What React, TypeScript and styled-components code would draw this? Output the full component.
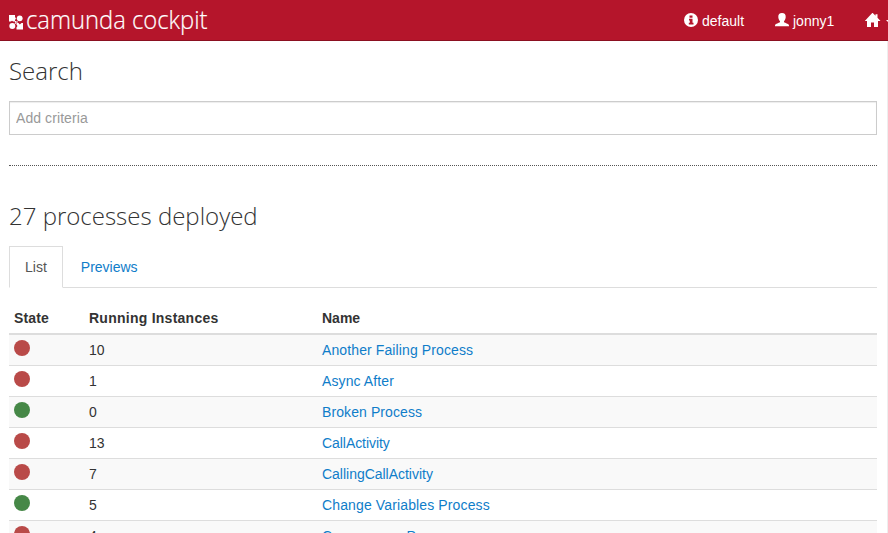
import React from "react";
import styled, { createGlobalStyle } from "styled-components";

const GlobalStyle = createGlobalStyle`
  * { box-sizing: border-box; }
  html, body { margin: 0; height: 533px; overflow: hidden; background: #fff; }
  body { font: 14px/20px "Liberation Sans", Arial, sans-serif; color: #333; }
`;

const Page = styled.div`
  height: 533px;
  overflow: hidden;
`;

const Header = styled.header`
  display: flex;
  height: 41px;
  background: #b5152b;
  border-bottom: 1px solid #8b1021;
  color: #fff;
`;

const Brand = styled.div`
  display: flex;
  flex: none;
  width: 684px;
  padding-left: 9px;
`;

const BrandMark = styled.svg`
  flex: none;
  width: 14px;
  height: 15px;
  margin-top: 15px;
`;

const BrandName = styled.span`
  margin-left: 3px;
  font: 300 26.5px/38px "Open Sans", sans-serif;
  -webkit-text-stroke: 0.2px #fff;
  white-space: nowrap;
  transform: scaleX(0.898);
  transform-origin: 0 50%;
`;

const NavItem = styled.div<{ $width: number }>`
  display: flex;
  flex: none;
  width: ${(p) => p.$width}px;
  padding-top: 11px;
  white-space: nowrap;
`;

const NavIcon = styled.svg`
  flex: none;
  width: 16px;
  height: 16px;
  margin: 2px 2px 0 0;
`;

const Caret = styled.span`
  flex: none;
  margin: 9px 0 0 3px;
  height: 4px;
  border: 4px solid transparent;
  border-top-color: #fff;
  border-bottom: 0;
`;

const Content = styled.main`
  height: 492px;
  padding: 0 10px 0 9px;
  border-right: 1px solid #eee;
  overflow: hidden;
`;

const Heading = styled.h3<{ $top: number }>`
  margin: 0;
  padding-top: ${(p) => p.$top}px;
  font: 300 24px/30px "Open Sans", sans-serif;
`;

const SearchInput = styled.input`
  display: block;
  width: 100%;
  height: 34px;
  margin-top: 15px;
  padding: 0 6px;
  border: 1px solid #ccc;
  border-radius: 0;
  outline: none;
  box-shadow: inset 0 1px 1px rgba(0, 0, 0, 0.075);
  font: inherit;
  letter-spacing: 0.08px;
  &::placeholder { color: #999; opacity: 1; }
`;

const Divider = styled.div`
  margin-top: 30px;
  border-top: 1px dotted #555;
`;

const Tabs = styled.div`
  display: flex;
  height: 42px;
  margin-top: 15px;
  border-bottom: 1px solid #ddd;
`;

const Tab = styled.div<{ $active?: boolean }>`
  height: 42px;
  margin-right: 2px;
  padding: 10px 15px;
  border: 1px solid ${(p) => (p.$active ? "#ddd" : "transparent")};
  border-bottom-color: ${(p) => (p.$active ? "#fff" : "transparent")};
  color: ${(p) => (p.$active ? "#555" : "#0f7dc9")};
`;

const Table = styled.table`
  width: 100%;
  margin-top: 15px;
  border-spacing: 0;
  table-layout: fixed;
`;

const HeadCell = styled.th<{ $width?: number; $tracking: number }>`
  width: ${(p) => (p.$width ? `${p.$width}px` : "auto")};
  height: 32px;
  padding: 0 5px;
  border-bottom: 2px solid #ddd;
  text-align: left;
  letter-spacing: ${(p) => p.$tracking}px;
`;

const Row = styled.tr`
  &:nth-child(odd) { background: #f9f9f9; }
`;

const Cell = styled.td`
  height: 31px;
  padding: 0 5px;
  border-bottom: 1px solid #ddd;
`;

const State = styled.span<{ $failing: boolean }>`
  display: block;
  width: 16px;
  height: 16px;
  margin-bottom: 5px;
  border-radius: 50%;
  background: ${(p) => (p.$failing ? "#b94a48" : "#468847")};
`;

const ProcessLink = styled.a<{ $tracking: number }>`
  color: #0f7dc9;
  letter-spacing: ${(p) => p.$tracking}px;
`;

const processes = [
  { name: "Another Failing Process", instances: 10, failing: true, tracking: 0.11 },
  { name: "Async After", instances: 1, failing: true, tracking: 0.1 },
  { name: "Broken Process", instances: 0, failing: false, tracking: 0.09 },
  { name: "CallActivity", instances: 13, failing: true, tracking: -0.06 },
  { name: "CallingCallActivity", instances: 7, failing: true, tracking: -0.02 },
  { name: "Change Variables Process", instances: 5, failing: false, tracking: 0.13 },
  { name: "Concurrency Process", instances: 4, failing: true, tracking: 0.1 },
];

export default function App() {
  return (
    <Page>
      <GlobalStyle />
      <Header>
        <Brand>
          <BrandMark viewBox="0 0 14 15">
            <path fill="#fff" d="M0 0h6v2.200a1.400 1.400 0 0 1 0 2.600V6.500H4a1.200 1.200 0 0 0-2 0H0z" />
            <circle cx="10.700" cy="3.300" r="2.900" fill="#fff" />
            <circle cx="3.300" cy="11" r="3" fill="#fff" />
            <path fill="#fff" d="M14 14.500H7.500v-2.300a1.300 1.300 0 0 0 0-2.400V8h2l1.300 1.500L12.500 8H14z" />
            <path fill="none" stroke="#fff" d="M5 5l2 2h2M6 9l1-2" />
          </BrandMark>
          <BrandName>camunda cockpit</BrandName>
        </Brand>
        <NavItem $width={91}>
          <NavIcon viewBox="0 0 16 16">
            <circle cx="7" cy="7" r="7" fill="#fff" />
            <path fill="#b5152b" d="M5.500 2.500h3v2.200h-3zM5 5.800h3.500v4h1v1.700H4.800V9.800h1V7.500H5z" />
          </NavIcon>
          default
        </NavItem>
        <NavItem $width={90}>
          <NavIcon viewBox="0 0 16 16">
            <path fill="#fff" d="M7 0c2.500 0 4 1.500 3.700 4.200-.2 1.800-.8 3-1.700 4v1.100c1.400.8 4.200 1.500 4.800 2.400.2.400.2 1 .2 1.500H0c0-.5 0-1.100.2-1.500.6-.9 3.400-1.600 4.800-2.400V8.200c-.9-1-1.500-2.200-1.700-4C3 1.500 4.500 0 7 0z" />
          </NavIcon>
          jonny1
        </NavItem>
        <NavItem $width={23}>
          <NavIcon viewBox="0 0 16 16">
            <path fill="#fff" d="M7.500-.3l3 3V1.200h2V4.700L15.500 8H13v6H9V9.500H6V14H2V8H-.2z" />
          </NavIcon>
          <Caret />
        </NavItem>
      </Header>
      <Content>
        <Heading $top={15}>Search</Heading>
        <SearchInput placeholder="Add criteria" />
        <Divider />
        <Heading $top={35}>27 processes deployed</Heading>
        <Tabs>
          <Tab $active>List</Tab>
          <Tab>Previews</Tab>
        </Tabs>
        <Table>
          <thead>
            <tr>
              <HeadCell $width={75} $tracking={0.15}>State</HeadCell>
              <HeadCell $width={233} $tracking={0.25}>Running Instances</HeadCell>
              <HeadCell $tracking={0}>Name</HeadCell>
            </tr>
          </thead>
          <tbody>
            {processes.map((p) => (
              <Row key={p.name}>
                <Cell><State $failing={p.failing} /></Cell>
                <Cell>{p.instances}</Cell>
                <Cell><ProcessLink $tracking={p.tracking}>{p.name}</ProcessLink></Cell>
              </Row>
            ))}
          </tbody>
        </Table>
      </Content>
    </Page>
  );
}
